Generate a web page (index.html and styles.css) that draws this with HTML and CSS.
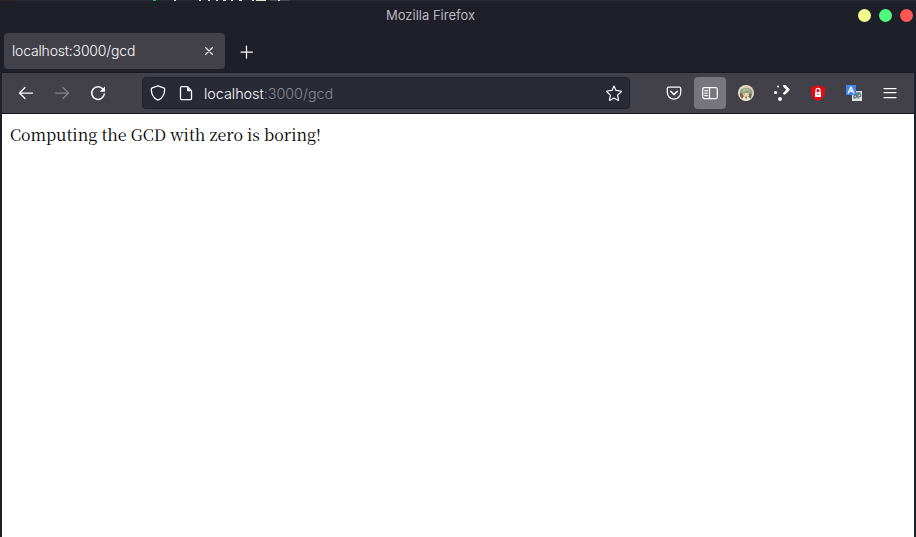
FILE: index.html
```
<!DOCTYPE html>
<html lang="en">
<head>
<meta charset="utf-8">
<title>Mozilla Firefox</title>
<link rel="stylesheet" href="styles.css">
</head>
<body>
<div class="window">
  <header class="titlebar">
    <svg class="backdrop" width="916" height="1" viewBox="0 0 916 1" aria-hidden="true"><path fill="#292a36" d="M0 0h916v1H0z"/><path fill="#30201f" d="M0 0h16v1H0z"/><path fill="#484954" d="M270 0h20v1h-20z"/><path fill="#28bd57" d="M153 0h3v1h-3z"/><path fill="#e1e1dc" d="M174 0h2v1h-2zM199 0h2v1h-2zM208 0h2v1h-2zM216 0h2v1h-2zM223 0h3v1h-3zM231 0h2v1h-2zM239 0h3v1h-3zM252 0h2v1h-2zM256 0h10v1h-10zM278 0h2v1h-2z"/></svg>
    <h1>Mozilla Firefox</h1>
    <div class="controls"><i class="minimize"></i><i class="maximize"></i><i class="close"></i></div>
  </header>
  <div class="tabs">
    <div class="tab"><span>localhost:3000/gcd</span><svg width="10" height="10" viewBox="0 0 10 10"><path d="M1.5 1.5l7 7m0-7l-7 7" stroke-width="1.100"/></svg></div>
    <svg class="newtab" width="14" height="14" viewBox="0 0 14 14"><path d="M6.500 1v12M1 7h11.500"/></svg>
  </div>
  <nav class="toolbar">
    <button class="tool" aria-label="Back"><svg viewBox="0 0 16 16"><path d="M14.500 8H1.500M7 2.500L1.500 8 7 13.500"/></svg></button>
    <button class="tool disabled" aria-label="Forward"><svg viewBox="0 0 16 16"><path d="M1.500 8h13M9 2.500L14.500 8 9 13.500"/></svg></button>
    <button class="tool" aria-label="Reload"><svg viewBox="0 0 16 16"><path d="M13 4.200A6.300 6.300 0 1 0 14.300 9" stroke-width="1.500"/><path class="solid" d="M15 1.500v5.300H9.700z"/></svg></button>
    <div class="address">
      <svg viewBox="0 0 16 16"><path d="M8 .8l5.700 2.100c.7.300 1 .6 1 1.300 0 5-2.300 9-6.700 11-4.400-2-6.700-6-6.700-11 0-.7.300-1 1-1.300z" stroke-width="1.300"/></svg>
      <svg viewBox="0 0 16 16"><path d="M3.700 1.700h5.800l4 4v7.800c0 .8-.4 1.200-1.200 1.200H3.700c-.8 0-1.200-.4-1.200-1.200V2.900c0-.8.4-1.200 1.200-1.200z" stroke-width="1.300"/><path class="solid" d="M9 2v4.200h4.200z"/></svg>
      <div class="url">localhost<span>:3000/gcd</span></div>
      <svg viewBox="0 0 16 16"><path d="M8 1.100l2 4.300 4.900.6c.5.100.6.500.3.800l-3.600 3.300.9 4.700c.1.500-.3.700-.7.500L8 13l-3.800 2.300c-.4.200-.8 0-.7-.5l.9-4.700L.8 6.800c-.3-.3-.2-.7.300-.8l4.900-.6z" stroke-width="1.200"/></svg>
    </div>
    <div class="extensions">
      <button class="tool" aria-label="Save to Pocket"><svg viewBox="0 0 16 16"><path d="M2.500 2h11c.8 0 1.200.4 1.200 1.200v4.300a6.700 6.700 0 0 1-13.400 0V3.200c0-.8.400-1.200 1.200-1.200z"/><path d="M4.800 6.500L8 9.500l3.200-3" stroke-width="1.700"/></svg></button>
      <button class="tool active" aria-label="Sidebars"><svg viewBox="0 0 16 16"><rect x=".7" y="2.600" width="14.600" height="11" rx="1.500"/><path d="M7.500 3v10.300M2.700 5.500h2.700M2.700 8h2.700M2.700 10.500h2.700"/></svg></button>
      <button class="tool" aria-label="Profile"><svg viewBox="0 0 16 16"><circle cx="8" cy="8" r="8" fill="#e2d9c0" stroke="none"/><g stroke="none"><path fill="#94a483" d="M2 7q0-4 6-4.500 6 .5 6.500 5L13 11H3z"/><path fill="#b3bd9c" d="M5 3.500l5 .5 2 2-4-1-3 2z"/><path fill="#7b6a4b" d="M2 8l2 0 2 4-2 2-2-3zm8 4l2-4 2 1-1 4-2 1z"/><path fill="#efd5b8" d="M5.500 8h5.500v2.500l-3 1.500-2.500-1.500z"/><path fill="#a5855f" d="M6 8.500h1v1H6zm3.500 0h1v1h-1z"/><path fill="#f1e9d6" d="M5 12h6l1 2-4 2-3.500-1.500z"/><path fill="#a47e56" d="M7 11.500h2v2H7z"/></g></svg></button>
      <button class="tool" aria-label="Plasma Integration"><svg viewBox="0 0 16 16"><path d="M10.500 1L14.200 4.700l-3.700 3.700" stroke-width="2.700"/><circle class="solid" cx="4" cy="1.500" r="1.100"/><circle class="solid" cx="1.600" cy="7.500" r="1.600"/><circle class="solid" cx="6" cy="14" r="2"/></svg></button>
      <button class="tool" aria-label="uBlock Origin"><svg viewBox="0 0 16 16"><path fill="#e40c12" stroke="none" d="M8 0q3.300 2 7 2v5c0 5-3 7.600-7 9-4-1.400-7-4-7-9V2q3.700 0 7-2z"/><path fill="#fff" stroke="none" d="M5 7h6v5H5z"/><path stroke="#fff" d="M6 7V5.400a2 2 0 0 1 4 0V7"/><circle cx="8" cy="9.300" r=".7" fill="#e40c12" stroke="none"/></svg></button>
      <button class="tool" aria-label="Translate"><svg viewBox="0 0 16 16"><path fill="#dde2e3" stroke="none" d="M6 6h10v10H6z"/><path stroke="#647983" stroke-width="1.300" d="M8 9q3-2 3 1t-3 3q-1-3 2-3m2 3q-1-5 2-4 2 2-1 3m-2-4h3"/><path fill="#4285ed" stroke="none" d="M0 0h10v10H0z"/><path stroke="#eef5ff" stroke-width="1.500" d="M2.300 8L5 2l2.700 6M3.400 6h3.200"/></svg></button>
      <button class="tool" aria-label="Menu"><svg viewBox="0 0 16 16"><path d="M2 3.500h12M2 7.500h12M2 12.500h12"/></svg></button>
    </div>
  </nav>
  <main>Computing the GCD with zero is boring!</main>
</div>
</body>
</html>
```
FILE: styles.css
```
* { box-sizing: border-box; }
body { margin: 0; font-family: Inter, sans-serif; color: #fbfbfe; }
.window { width: 916px; height: 537px; overflow: hidden; background: #1f1f29; display: flex; flex-direction: column; }
.titlebar { height: 32px; flex: none; position: relative; display: grid; grid-template-columns: 1fr auto; }
h1 { margin: 0 0 0 386px; padding-top: 7px; font-size: 13px; line-height: 16px; font-weight: 400; color: #b9b9bf; }
.controls { display: flex; gap: 8px; padding: 9px 3px 0 0; }
.controls i { width: 13px; height: 13px; border-radius: 50%; }
.minimize { background: #f1fa8c; }
.maximize { background: #50fa7b; }
.close { background: #ff5555; }
svg { flex: none; fill: none; stroke: currentColor; stroke-width: 1.25; stroke-linecap: round; stroke-linejoin: round; }
.backdrop { position: absolute; top: 0; left: 0; stroke: none; }
.tabs { height: 40px; flex: none; display: flex; align-items: flex-start; padding: 1px 4px; }
.tab { width: 221px; height: 36px; padding: 0 11px 0 8px; display: flex; align-items: center; justify-content: space-between; background: #42414a; border-radius: 4px; font-size: 14px; font-weight: 350; letter-spacing: -0.18px; }
.tab span { padding-bottom: 1px; }
.newtab { margin: 12px 0 0 15px; }
.toolbar { height: 42px; flex: none; display: flex; align-items: center; margin: 0 2px; padding: 0 0 0 6px; background: #42414a; border: solid #171720; border-width: 1px 0; }
.tool { width: 32px; height: 32px; margin: 0 2px; padding: 8px; flex: none; border: 0; border-radius: 4px; background: none; color: #fbfbfe; }
.tool svg { width: 16px; height: 16px; display: block; }
.tool.disabled { color: #85848a; }
.tool.active { background: #77767c; }
.solid { fill: currentColor; stroke: none; }
.address { width: 488px; height: 32px; flex: none; margin-left: 26px; padding: 0 7px; display: flex; align-items: center; gap: 12px; background: #282a36; border: 1px solid #1e1f29; border-radius: 4px; }
.address svg { width: 16px; height: 16px; }
.url { flex: 1; margin-left: -2px; font-size: 14.4px; font-weight: 350; letter-spacing: -0.04px; }
.url span { color: #85868d; }
.extensions { display: flex; margin-left: 26px; }
main { flex: 1; margin: 0 2px; padding: 9px 8px; background: #fff; color: #000; font: 16px/24px "Noto Serif CJK SC", "Source Serif Pro", "Liberation Serif", serif; }
```
